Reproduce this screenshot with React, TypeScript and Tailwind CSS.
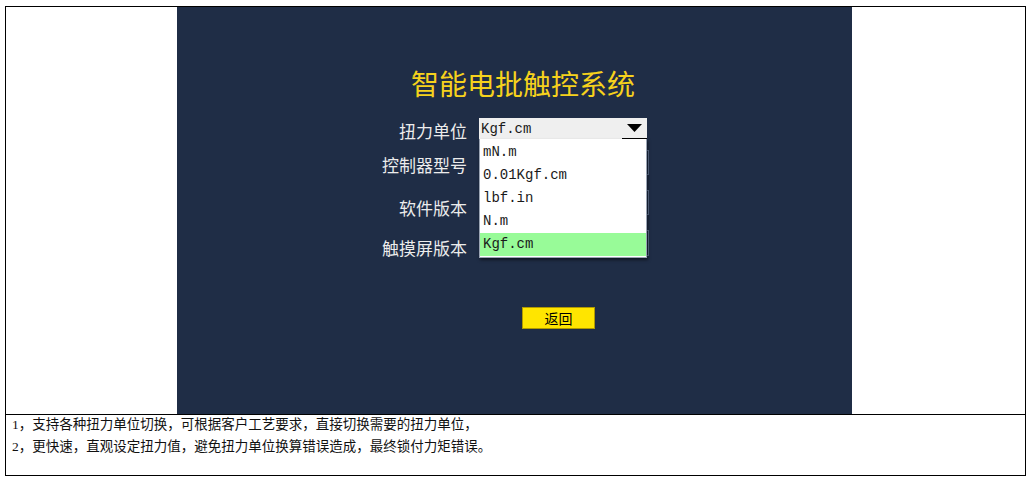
import { useState } from 'react';

const UNITS = ['mN.m', '0.01Kgf.cm', 'lbf.in', 'N.m', 'Kgf.cm'];

const cjk = "font-['Noto_Sans_CJK_SC',sans-serif]";
const mono = "font-['Liberation_Mono','Noto_Sans_CJK_SC',monospace]";

function Row({ label, labelTop, height, children }: { label: string; labelTop: string; height: string; children: React.ReactNode }) {
  return (
    <div className={`flex items-start ${height}`}>
      <div className={`w-[290px] text-right text-[17px] leading-[22px] text-[#ececec] ${cjk} ${labelTop}`}>{label}</div>
      <div className="ml-[12px]">{children}</div>
    </div>
  );
}

function UnitSelect() {
  const [value, setValue] = useState('Kgf.cm');
  return (
    <div className="relative w-[168px]">
      <div className="flex h-[21px] bg-[#efefef]">
        <div className={`flex-1 pl-[2px] pt-[1px] text-[14px] leading-[21px] text-[#1a1a1a] ${mono}`}>{value}</div>
        <div className="flex w-[25px] items-center justify-center border-b border-black">
          <svg width="15" height="8" viewBox="0 0 15 8">
            <path d="M0 0h15L7.5 8z" fill="#000" />
          </svg>
        </div>
      </div>
      <ul className="absolute left-0 top-[21px] z-10 w-[168px] border border-t-0 border-[#9aa4b4] bg-white pb-[1px] pt-[2px] shadow-[1px_2px_3px_rgba(0,0,0,0.5)]">
        {UNITS.map((u) => (
          <li
            key={u}
            onClick={() => setValue(u)}
            className={`h-[23px] pl-[3px] text-[14px] leading-[23px] text-[#1a1a1a] ${mono} ${u === value ? 'bg-[#98fb98]' : ''}`}
          >
            {u}
          </li>
        ))}
      </ul>
    </div>
  );
}

function DarkInput({ h }: { h: string }) {
  return <div className={`w-[170px] ${h} border border-[#5d6f8c] bg-[#1b2a42]`} />;
}

export default function App() {
  return (
    <div className="h-[484px] w-[1033px] bg-white pl-[5px] pt-[6px]">
      <div className="w-[1021px] border border-black">
        <div className="h-[407px]">
          <div className="ml-[171px] h-[407px] w-[675px] bg-[#1f2d46] pt-[62px]">
            <div className={`ml-[234px] text-[28px] leading-[28px] text-[#f6d21c] ${cjk}`}>智能电批触控系统</div>
            <div className="mt-[21px]">
              <Row label="扭力单位" labelTop="mt-[2px]" height="h-[32px]">
                <UnitSelect />
              </Row>
              <Row label="控制器型号" labelTop="mt-[4px]" height="h-[40px]">
                <DarkInput h="h-[25px]" />
              </Row>
              <Row label="软件版本" labelTop="mt-[7px]" height="h-[40px]">
                <DarkInput h="h-[25px]" />
              </Row>
              <Row label="触摸屏版本" labelTop="mt-[7px]" height="h-[40px]">
                <DarkInput h="h-[26px]" />
              </Row>
            </div>
            <button
              className={`ml-[345px] mt-[37px] block h-[22px] w-[73px] border border-[#b19a00] bg-[#ffe500] text-[14px] leading-[20px] text-black ${cjk}`}
            >
              返回
            </button>
          </div>
        </div>
        <div className={`h-[61px] border-t border-black pl-[6px] text-[13.5px] leading-[22px] text-[#111] font-['Liberation_Serif','Noto_Sans_CJK_SC',serif]`}>
          <div className="-mt-[1px]">1，支持各种扭力单位切换，可根据客户工艺要求，直接切换需要的扭力单位，</div>
          <div>2，更快速，直观设定扭力值，避免扭力单位换算错误造成，最终锁付力矩错误。</div>
        </div>
      </div>
    </div>
  );
}
